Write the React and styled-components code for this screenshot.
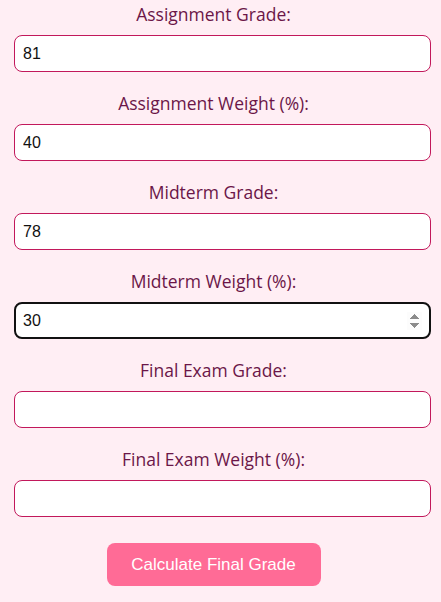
import React from 'react'
import styled, { createGlobalStyle } from 'styled-components'

const GlobalStyle = createGlobalStyle`
    html, body {
        margin: 0;
        padding: 0;
        background-color: #ffeef4;
    }
`
const Container = styled.div`
    display: flex;
    flex-direction: column;
    align-items: center;
    padding: 3px 28px 16px 14px;
    background-color: #ffeef4;
`
const Field = styled.div`
    display: flex;
    flex-direction: column;
    align-items: center;
    width: 100%;
    margin-bottom: 20px;
`
const Label = styled.label`
    font-family: "Open Sans", "Noto Sans", sans-serif;
    font-size: 17.5px;
    line-height: 22px;
    color: #6b1648;
    margin-bottom: 10px;
`
const Input = styled.input`
    box-sizing: border-box;
    align-self: flex-start;
    width: calc(100% + 18px);
    height: 37px;
    padding: 0 8px;
    border: 1px solid #c2185b;
    border-radius: 8px;
    background: #fff;
    font-family: "Liberation Sans", Arial, sans-serif;
    font-size: 16px;
    color: #111;
    &:focus {
        outline: none;
        border: 2px solid #111;
        padding: 0 7px;
    }
`
const Button = styled.button`
    margin-top: 6px;
    width: 214px;
    height: 43px;
    border: none;
    border-radius: 8px;
    background-color: #ff6b96;
    color: white;
    font-family: "Liberation Sans", Arial, sans-serif;
    font-size: 17px;
    cursor: pointer;
`

const fields = [
    { label: 'Assignment Grade:', value: '81' },
    { label: 'Assignment Weight (%):', value: '40' },
    { label: 'Midterm Grade:', value: '78' },
    { label: 'Midterm Weight (%):', value: '30', focus: true },
    { label: 'Final Exam Grade:', value: '' },
    { label: 'Final Exam Weight (%):', value: '' },
]

const App = () => {
  return (
    <Container>
        <GlobalStyle />
        {fields.map((f) => (
            <Field key={f.label}>
                <Label>{f.label}</Label>
                <Input type="number" defaultValue={f.value} autoFocus={f.focus} />
            </Field>
        ))}
        <Button>Calculate Final Grade</Button>
    </Container>
  )
}

export default App
